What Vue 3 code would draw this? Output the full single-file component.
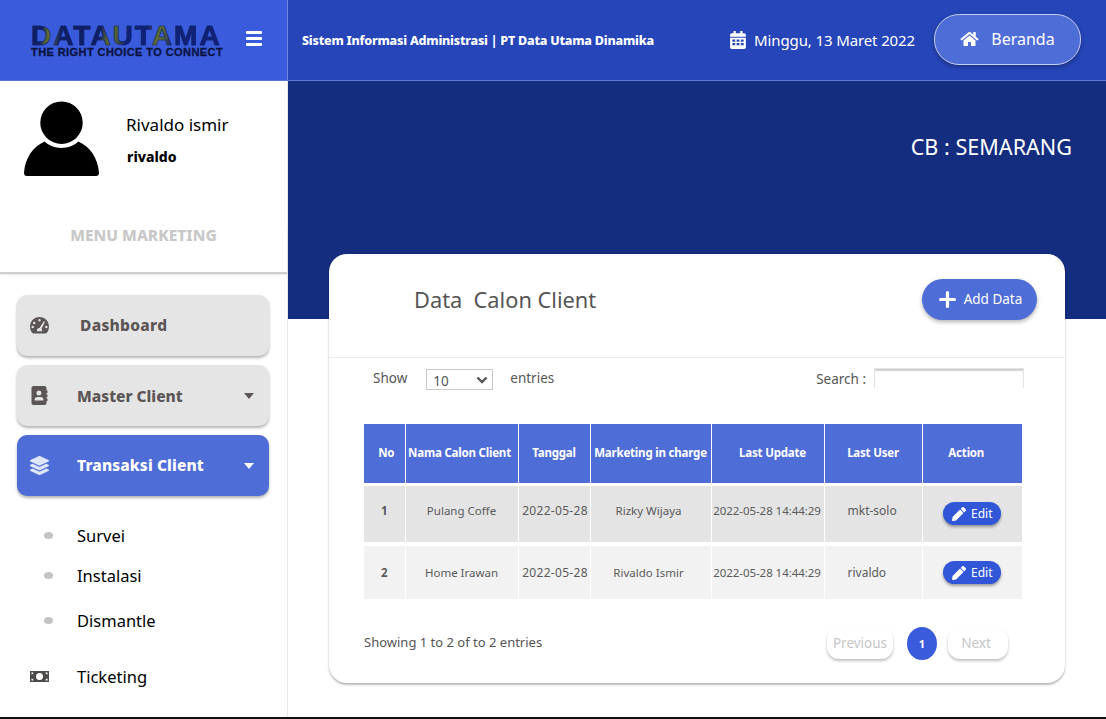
<template>
  <div class="page">
    <header class="topbar">
      <div class="brand">
        <div class="logo">
          <span class="logo-main">DATAUTAMA</span>
          <span class="logo-sub">THE RIGHT CHOICE TO CONNECT</span>
        </div>
        <button class="burger" aria-label="menu"><i></i><i></i><i></i></button>
      </div>
      <div class="topnav">
        <span class="app-title">Sistem Informasi Administrasi | PT Data Utama Dinamika</span>
        <span class="today">
          <svg viewBox="0 0 448 512" width="16" height="18"><path fill="#fff" fill-rule="evenodd" d="M0 192h448v272c0 26.500-21.500 48-48 48H48c-26.500 0-48-21.500-48-48zM64 240v64h80v-64zm120 0v64h80v-64zm120 0v64h80v-64zM64 344v64h80v-64zm120 0v64h80v-64zm120 0v64h80v-64zM448 160H0v-48c0-26.500 21.500-48 48-48h48V12c0-6.600 5.400-12 12-12h40c6.600 0 12 5.400 12 12v52h128V12c0-6.600 5.400-12 12-12h40c6.600 0 12 5.400 12 12v52h48c26.500 0 48 21.500 48 48z"/></svg>
          Minggu, 13 Maret 2022
        </span>
        <button class="home-btn">
          <svg viewBox="0 0 576 512" width="19" height="16"><path fill="#fff" d="M280.370 148.260L96 300.110V464a16 16 0 0 0 16 16l112.060-.29a16 16 0 0 0 15.920-16V368a16 16 0 0 1 16-16h64a16 16 0 0 1 16 16v95.640a16 16 0 0 0 16 16.050L464 480a16 16 0 0 0 16-16V300L295.670 148.260a12.190 12.190 0 0 0-15.300 0zM571.600 251.470L488 182.560V44.050a12 12 0 0 0-12-12h-56a12 12 0 0 0-12 12v72.610L318.470 43a48 48 0 0 0-61 0L4.340 251.470a12 12 0 0 0-1.600 16.900l25.500 31A12 12 0 0 0 45.150 301l235.220-193.740a12.190 12.190 0 0 1 15.300 0L530.900 301a12 12 0 0 0 16.900-1.600l25.500-31a12 12 0 0 0-1.700-16.930z"/></svg>
          Beranda
        </button>
      </div>
    </header>

    <div class="body">
      <aside class="sidebar">
        <div class="profile">
          <svg class="avatar" viewBox="0 0 76 76" width="75" height="75">
            <circle cx="38" cy="22" r="21.500" fill="#000"/>
            <path fill="#000" d="M21 41c4 4 10.500 6.500 17 6.500S51 45 55 41c12 5 20 17 21 32 0 2-1 3-3 3H3c-2 0-3-1-3-3 1-15 9-27 21-32z"/>
          </svg>
          <div class="who">
            <div class="who-name">Rivaldo ismir</div>
            <div class="who-login">rivaldo</div>
          </div>
        </div>
        <div class="menu-title">MENU MARKETING</div>

        <nav class="menu">
          <a class="menu-btn dash">
            <svg viewBox="0 0 20 18" width="19" height="17"><path fill="#5c5555" fill-rule="evenodd" d="M10 0C4.500 0 0 4.300 0 10c0 2.500.8 4.800 2.200 6.700.4.500 1 .8 1.600.8h12.400c.6 0 1.200-.3 1.600-.8C19.200 14.800 20 12.500 20 10c0-5.700-4.500-10-10-10zM10 2.200a1.300 1.300 0 1 1 0 2.600 1.300 1.300 0 0 1 0-2.600zM4.400 5a1.300 1.300 0 1 1 0 2.600 1.300 1.300 0 0 1 0-2.600zM2.800 9.200a1.300 1.300 0 1 1 0 2.600 1.300 1.300 0 0 1 0-2.600zM17.200 9.200a1.300 1.300 0 1 1 0 2.600 1.300 1.300 0 0 1 0-2.600zM14.600 4.500l1.200.6-3.700 7.300c.5.500.7 1 .7 1.700 0 .4-.1.800-.3 1.100H7.500a2.500 2.500 0 0 1 2.500-3.600z"/></svg>
            <span>Dashboard</span>
          </a>
          <a class="menu-btn master">
            <svg viewBox="0 0 16 19" width="16" height="19"><path fill="#5c5555" fill-rule="evenodd" d="M2 0h11c1.100 0 2 .9 2 2v2.500h1v2.500h-1v1.500h1v2.500h-1v1.500h1V15h-1v2c0 1.100-.9 2-2 2H2c-1.100 0-2-.9-2-2V2C0 .9.900 0 2 0zM7.500 4.500a2.500 2.500 0 1 0 0 5 2.500 2.500 0 0 0 0-5zM3.500 14.500h8c.3 0 .5-.2.500-.5 0-1.700-1.300-3-3-3H6c-1.700 0-3 1.300-3 3 0 .3.200.5.500.5z"/></svg>
            <span>Master Client</span>
            <b class="caret"></b>
          </a>
          <a class="menu-btn active">
            <svg viewBox="0 0 512 512" width="19" height="19"><path fill="#dfe5fa" d="M12.410 148.020l232.940 105.670c6.800 3.090 14.490 3.090 21.290 0l232.940-105.670c16.550-7.510 16.550-32.520 0-40.030L266.650 2.310a25.607 25.607 0 0 0-21.290 0L12.410 107.980c-16.550 7.510-16.550 32.530 0 40.040zm487.180 88.280l-58.090-26.330-161.640 73.270c-7.560 3.430-15.590 5.170-23.860 5.170s-16.290-1.740-23.860-5.170L70.510 209.970l-58.100 26.330c-16.550 7.500-16.550 32.500 0 40l232.940 105.590c6.800 3.080 14.490 3.080 21.290 0L499.590 276.300c16.550-7.500 16.550-32.500 0-40zm0 127.800l-57.870-26.230-161.860 73.370c-7.560 3.430-15.590 5.170-23.860 5.170s-16.290-1.740-23.860-5.170L70.290 337.870 12.410 364.100c-16.550 7.500-16.550 32.500 0 40l232.940 105.590c6.800 3.080 14.490 3.080 21.290 0L499.590 404.100c16.550-7.500 16.550-32.500 0-40z"/></svg>
            <span>Transaksi Client</span>
            <b class="caret"></b>
          </a>
        </nav>

        <ul class="submenu">
          <li v-for="item in subItems" :key="item"><i class="dot"></i>{{ item }}</li>
        </ul>
        <div class="ticketing">
          <svg viewBox="0 0 19 11" width="19" height="11"><path fill="#4f4a4a" fill-rule="evenodd" d="M0 0h19v11H0zM9.500 2a3.500 3.500 0 1 0 0 7 3.500 3.500 0 0 0 0-7zM1.500 1.500v2a2 2 0 0 0 2-2zM15.500 1.500a2 2 0 0 0 2 2v-2zM1.500 7.500v2h2a2 2 0 0 0-2-2zM17.500 7.500a2 2 0 0 0-2 2h2z"/></svg>
          <span>Ticketing</span>
        </div>
      </aside>

      <main class="content">
        <div class="banner"><span class="branch">CB : SEMARANG</span></div>
        <section class="card">
          <div class="card-head">
            <h2>Data&nbsp; Calon Client</h2>
            <button class="add-btn">
              <svg viewBox="0 0 16 16" width="17" height="17"><path d="M8 1.500v13M1.500 8h13" stroke="#fff" stroke-width="3" stroke-linecap="round"/></svg>
              Add Data
            </button>
          </div>
          <div class="card-body">
            <div class="toolbar">
              <div class="show">
                <span>Show</span>
                <span class="select-wrap">
                  <select><option>10</option><option>25</option></select>
                  <svg viewBox="0 0 12 8" width="12" height="8"><path d="M1.500 1.500L6 6l4.500-4.500" fill="none" stroke="#555" stroke-width="2.400"/></svg>
                </span>
                <span class="entries">entries</span>
              </div>
              <label class="search">Search : <input type="text"></label>
            </div>

            <table class="grid">
              <colgroup>
                <col v-for="w in colWidths" :key="w" :style="{ width: w + 'px' }">
              </colgroup>
              <thead>
                <tr>
                  <th v-for="h in headers" :key="h">{{ h }}</th>
                </tr>
              </thead>
              <tbody>
                <tr v-for="row in rows" :key="row.no">
                  <td class="no">{{ row.no }}</td>
                  <td>{{ row.name }}</td>
                  <td class="date">{{ row.date }}</td>
                  <td class="pic">{{ row.pic }}</td>
                  <td class="stamp">{{ row.updated }}</td>
                  <td class="user">{{ row.user }}</td>
                  <td class="action">
                    <button class="edit-btn">
                      <svg viewBox="0 0 512 512" width="14" height="14"><path fill="#fff" d="M497.900 142.100l-46.100 46.100c-4.700 4.700-12.300 4.700-17 0l-111-111c-4.700-4.700-4.700-12.300 0-17l46.100-46.100c18.700-18.700 49.100-18.700 67.900 0l60.100 60.100c18.800 18.700 18.800 49.100 0 67.900zM284.200 99.800L21.600 362.400.4 483.900c-2.900 16.400 11.400 30.600 27.800 27.800l121.500-21.300 262.600-262.600c4.700-4.700 4.700-12.300 0-17l-111-111c-4.800-4.700-12.400-4.700-17.100 0z"/></svg>
                      Edit
                    </button>
                  </td>
                </tr>
              </tbody>
            </table>

            <div class="table-foot">
              <span>Showing 1 to 2 of to 2 entries</span>
              <div class="pager">
                <button class="page-link">Previous</button>
                <button class="page-num">1</button>
                <button class="page-link next">Next</button>
              </div>
            </div>
          </div>
        </section>
      </main>
    </div>
  </div>
</template>

<script setup>
const subItems = ['Survei', 'Instalasi', 'Dismantle']
const colWidths = [41, 113, 72, 121, 113, 98, 100]
const headers = ['No', 'Nama Calon Client', 'Tanggal', 'Marketing in charge', 'Last Update', 'Last User', 'Action']
const rows = [
  { no: 1, name: 'Pulang Coffe', date: '2022-05-28', pic: 'Rizky Wijaya', updated: '2022-05-28 14:44:29', user: 'mkt-solo' },
  { no: 2, name: 'Home Irawan', date: '2022-05-28', pic: 'Rivaldo Ismir', updated: '2022-05-28 14:44:29', user: 'rivaldo' }
]
</script>

<style>
html, body { margin: 0; background: #fff; overflow: hidden; }
</style>

<style scoped>
* { box-sizing: border-box; }
.page {
  width: 1106px;
  height: 719px;
  display: flex;
  flex-direction: column;
  overflow: hidden;
  border-bottom: 2px solid #111;
  font-family: "Noto Sans", "Open Sans", sans-serif;
  color: #555;
}
button { font-family: inherit; border: none; cursor: pointer; }

.topbar {
  display: flex;
  height: 81px;
  flex: none;
  border-bottom: 1px solid #5b77d6;
}
.brand {
  width: 288px;
  background: #3a5bdc;
  border-right: 1px solid #6f87e0;
  display: flex;
  align-items: center;
  padding: 0 25px 0 31px;
  justify-content: space-between;
}
.logo { display: flex; flex-direction: column; align-items: stretch; margin-top: 2px; }
.logo-main {
  font: 900 28px/21px "Liberation Sans", Arial, sans-serif;
  letter-spacing: 2px;
  height: 21px;
  background: linear-gradient(100deg, #0f1f66 0 6%, #5a6a30 9% 12%, #0f1f66 16% 36%, #55652f 40% 44%, #0f2277 50% 60%, #5a6a30 64% 68%, #0f2277 74%);
  -webkit-background-clip: text;
  background-clip: text;
  color: transparent;
  -webkit-text-stroke: .6px #0f1f66;
}
.logo-sub {
  font: 700 11px/11px "Liberation Sans", Arial, sans-serif;
  color: #0b1440;
  white-space: nowrap;
  letter-spacing: .42px;
  margin-top: 1px;
  -webkit-text-stroke: .3px #0b1440;
}
.burger {
  width: 16px;
  background: none;
  padding: 0;
  display: flex;
  flex-direction: column;
  gap: 3px;
  margin-bottom: 3px;
}
.burger i { display: block; height: 3px; background: #fff; border-radius: 1px; }

.topnav {
  flex: 1;
  background: #2645b8;
  display: flex;
  align-items: center;
  padding: 0 25px 0 14px;
}
.app-title {
  color: #fff;
  font-size: 12.500px;
  font-weight: 800;
  letter-spacing: -.21px;
  margin-right: auto;
}
.today {
  color: #fff;
  font-size: 15px;
  letter-spacing: -.12px;
  display: flex;
  align-items: center;
  gap: 8px;
  margin-right: 19px;
}
.home-btn {
  width: 147px;
  height: 51px;
  border-radius: 25px;
  background: #4f6dd6;
  border: 1px solid #c3cef2;
  color: #fff;
  font-size: 16px;
  display: flex;
  align-items: center;
  justify-content: center;
  gap: 12px;
  margin-bottom: 2px;
  box-shadow: 0 2px 4px rgba(0, 0, 0, .3);
}

.body { flex: 1; display: flex; min-height: 0; }

.sidebar {
  width: 288px;
  flex: none;
  border-right: 1px solid #e9e9e9;
  display: flex;
  flex-direction: column;
}
.profile {
  display: flex;
  padding: 20px 0 0 24px;
}
.who { margin-left: 27px; }
.who-name { color: #000; font-size: 17px; line-height: 24px; margin-top: 12px; }
.who-login { color: #000; font-size: 14px; font-weight: 800; margin: 10px 0 0 1px; line-height: 20px; }
.menu-title {
  margin-top: 49px;
  height: 49px;
  text-align: center;
  color: #c8c8c8;
  font-size: 15.500px;
  font-weight: 800;
  line-height: 20px;
  border-bottom: 2px solid #cfcfcf;
  box-shadow: 0 1px 2px rgba(0, 0, 0, .1);
}
.menu {
  display: flex;
  flex-direction: column;
  gap: 9px;
  padding: 21px 18px 0 17px;
}
.menu-btn {
  height: 61px;
  border-radius: 10px;
  background: #e5e5e5;
  box-shadow: 0 2px 3px rgba(0, 0, 0, .3);
  display: flex;
  align-items: center;
  padding: 0 15px 0 13px;
  color: #5c5555;
  font-size: 15.500px;
  font-weight: 800;
}
.menu-btn svg { width: 19px; flex: none; }
.menu-btn span { margin-left: 28px; margin-bottom: 1px; }
.menu-btn.master span { margin-bottom: 0; }
.menu-btn.dash span { margin-left: 31px; letter-spacing: .3px; }
.menu-btn.active { background: #4f6dd6; color: #fff; }
.menu-btn.active span { letter-spacing: .13px; }
.caret {
  margin-left: auto;
  border: 5.500px solid transparent;
  border-top: 6px solid currentColor;
  border-bottom: none;
}
.submenu { list-style: none; margin: 19px 0 0; padding: 0; }
.submenu li {
  display: flex;
  align-items: center;
  color: #000;
  font-size: 16.500px;
  height: 40px;
  padding-left: 44px;
}
.submenu li:last-child { height: 40px; margin-top: 5px; }
.dot { width: 9px; height: 7px; border-radius: 50%; background: #c4c4c4; margin-right: 24px; }
.ticketing {
  display: flex;
  align-items: center;
  height: 40px;
  margin-top: 16px;
  padding-left: 30px;
  color: #000;
  font-size: 16.500px;
}
.ticketing span { margin-left: 28px; }

.content { flex: 1; min-width: 0; display: flex; flex-direction: column; }
.banner {
  height: 238px;
  flex: none;
  background: #152d7e;
  display: flex;
  justify-content: flex-end;
  padding: 51px 34px 0 0;
}
.branch { color: #fff; font-size: 21.600px; line-height: 30px; height: 30px; }
.card {
  margin: -65px 41px 0;
  height: 429px;
  background: #fff;
  border-radius: 18px;
  box-shadow: 0 0 3px rgba(0, 0, 0, .08), 0 2px 2px rgba(0, 0, 0, .25);
  position: relative;
}
.card-head {
  height: 104px;
  border-bottom: 1px solid #ececec;
  display: flex;
  align-items: center;
  justify-content: space-between;
  padding: 0 28px 10px 85px;
}
.card-head h2 { margin: -3px 0 0; font-size: 21.800px; font-weight: 400; color: #555; }
.add-btn {
  width: 115px;
  height: 41px;
  border-radius: 21px;
  background: #4f6dd6;
  color: #fff;
  font-size: 13.500px;
  display: flex;
  align-items: center;
  justify-content: center;
  gap: 8px;
  margin-top: -3px;
  padding: 0 0 0 2px;
  box-shadow: 0 2px 4px rgba(0, 0, 0, .3);
}
.card-body { padding: 0 43px 0 35px; }
.toolbar {
  height: 66px;
  display: flex;
  justify-content: space-between;
  padding-top: 9px;
  font-size: 13.500px;
}
.show { display: flex; align-items: flex-start; padding-left: 9px; line-height: 22px; }
.select-wrap { position: relative; margin-left: 19px; display: block; width: 67px; height: 21px; margin-top: 2px; }
.select-wrap select {
  appearance: none;
  width: 100%;
  height: 100%;
  border: 1px solid #c9c9c9;
  background: #fff;
  color: #555;
  font: inherit;
  padding: 0 0 0 6px;
  border-radius: 0;
}
.select-wrap svg { position: absolute; right: 5px; top: 7px; }
.entries { margin-left: 17px; }
.search { display: flex; align-items: center; height: 22px; margin-right: -2px; margin-top: 1px; }
.search input {
  width: 150px;
  height: 20px;
  margin: -3px 0 0 8px;
  border: 1px solid #e4e4e4;
  border-bottom: none;
  box-shadow: inset 0 2px 1px rgba(0, 0, 0, .18);
  outline: none;
}

.grid {
  table-layout: fixed;
  width: 658px;
  border-collapse: collapse;
  font-size: 11.500px;
}
.grid th, .grid td {
  padding: 0;
  text-align: center;
  border-right: 1.500px solid #fff;
}
.grid th:last-child, .grid td:last-child { border-right: none; }
.grid th {
  height: 60px;
  padding-bottom: 2px;
  background: #4f6dd6;
  color: #fff;
  font-size: 11.500px;
  font-weight: 700;
  letter-spacing: -.2px;
  white-space: nowrap;
}
.grid th:nth-child(1) { padding-left: 4px; }
.grid th:nth-child(2) { padding-right: 4px; }
.grid th:nth-child(5) { padding-left: 10px; }
.grid th:nth-child(7) { padding-right: 12px; }
.grid thead tr { border-bottom: 3px solid #fff; }
.grid tbody tr:nth-child(1) { background: #e4e4e4; height: 60px; border-bottom: 4px solid #fff; }
.grid tbody tr:nth-child(1) td { padding-bottom: 6px; }
.grid tbody tr:nth-child(2) { background: #f2f2f2; height: 55px; }
.grid td { color: #5a5a5a; white-space: nowrap; }
.grid td.no { font-weight: 700; }
.grid td.date { font-size: 12px; letter-spacing: .3px; padding-left: 2px; }
.grid td.pic { padding-right: 4px; }
.grid td.stamp { letter-spacing: -.05px; padding-right: 1px; }
.grid td.user { text-align: left; padding-left: 23px; font-size: 12px; }
.grid tbody tr td.action { padding: 0; }
.edit-btn {
  width: 58px;
  height: 23px;
  border-radius: 12px;
  background: #3157d8;
  color: #fff;
  font-size: 12px;
  display: inline-flex;
  align-items: center;
  justify-content: center;
  gap: 5px;
  padding: 0;
  vertical-align: middle;
  box-shadow: 0 2px 3px rgba(0, 0, 0, .35);
}

.table-foot {
  display: flex;
  justify-content: space-between;
  align-items: center;
  height: 34px;
  margin-top: 26px;
  font-size: 13px;
  color: #555;
}
.pager { display: flex; align-items: center; gap: 14px; margin: 3px 14px 0 0; }
.page-link {
  height: 31px;
  width: 66px;
  padding: 0 0 2px;
  border-radius: 12px;
  background: #fff;
  color: #c6c6c6;
  font-size: 13.500px;
  box-shadow: 0 2px 3px rgba(0, 0, 0, .25);
}
.page-link.next { width: 60px; margin-left: -3px; padding-right: 4px; }
.page-num {
  width: 30px;
  height: 33px;
  padding: 0;
  border-radius: 50%;
  background: #3a5bdc;
  color: #fff;
  font-size: 11px;
  font-weight: 700;
}
</style>
